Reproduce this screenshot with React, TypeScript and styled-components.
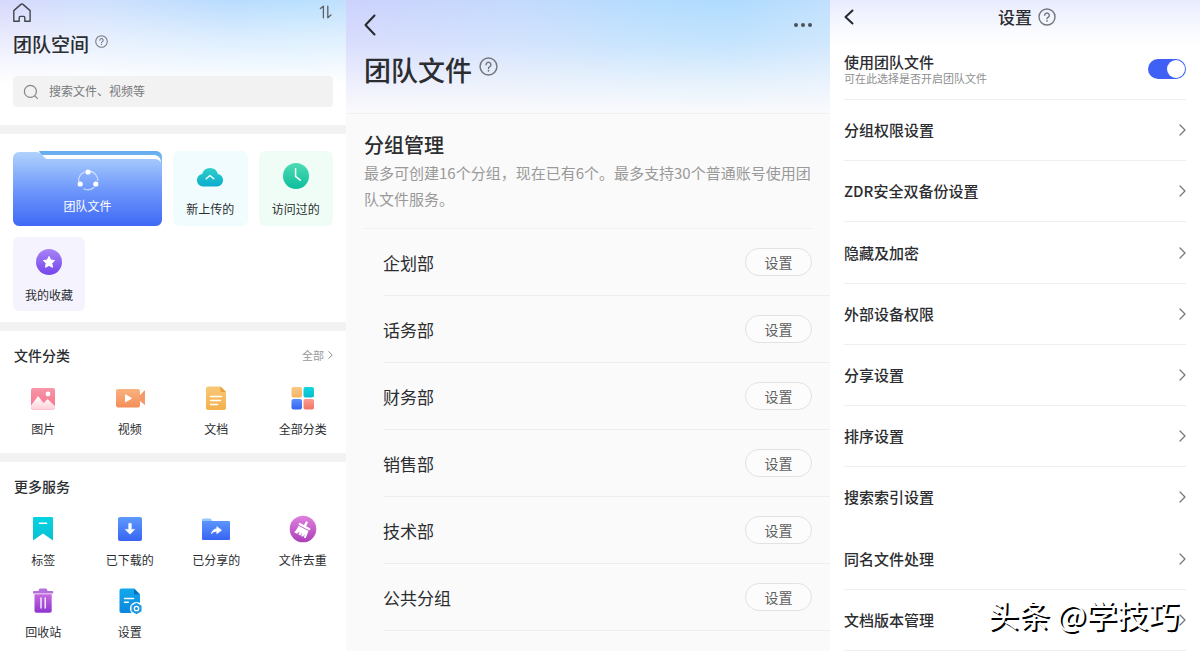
import React from "react";
import styled, { createGlobalStyle } from "styled-components";

const GlobalStyle = createGlobalStyle`
  *, *::before, *::after { box-sizing: border-box; }
  body {
    margin: 0;
    font-family: "Noto Sans CJK SC", "Noto Sans", sans-serif;
    color: #2b2d30;
    background: #fff;
  }
  h1, h2, p, ul { margin: 0; padding: 0; }
  ul { list-style: none; }
  button { font: inherit; color: inherit; padding: 0; border: 0; background: none; cursor: pointer; }
  svg { display: block; flex: none; }
`;

const Page = styled.main`
  display: grid;
  grid-template-columns: 346fr 484fr 370fr;
  min-height: 100vh;
`;

/* ---------- team space ---------- */

const SpacePanel = styled.section`
  min-width: 0;
  background: #fff;
`;

const SpaceHeader = styled.header`
  padding: 3px 13px 18px;
  background:
    linear-gradient(180deg, rgba(255, 255, 255, 0) 0, rgba(255, 255, 255, 0.5) 38px, #fff 84px),
    linear-gradient(90deg, #d6d8fb 0%, #cfe0fd 28%, #b9dcfe 66%, #b9e0fe 88%, #c0e0fd 100%);
`;

const TopBar = styled.div`
  display: flex;
  align-items: center;
  justify-content: space-between;
`;

const IconButton = styled.button`
  display: flex;
`;

const TitleRow = styled.div<{ $gap: number }>`
  display: flex;
  align-items: flex-start;
  gap: ${(p) => p.$gap}px;
`;

const SpaceTitle = styled.h1`
  margin-top: 7px;
  font-size: 19px;
  line-height: 28px;
  font-weight: 500;
`;

const SpaceHelp = styled(IconButton)`
  margin-top: 12px;
`;

const SearchBox = styled.label`
  display: flex;
  align-items: center;
  gap: 10px;
  height: 31px;
  margin-top: 18px;
  padding: 0 10px;
  border-radius: 4px;
  background: #f2f2f2;
`;

const SearchInput = styled.input`
  flex: 1;
  min-width: 0;
  padding: 0 0 2px;
  border: 0;
  outline: 0;
  background: none;
  font: inherit;
  font-size: 12px;
  line-height: 18px;
  &::placeholder { color: #77797c; opacity: 1; }
`;

const Block = styled.section`
  padding-bottom: 15px;
  border-top: 9px solid #f2f2f2;
  &:last-child { padding-bottom: 8px; }
`;

const Shortcuts = styled.div`
  display: grid;
  grid-template-columns: 2fr 1fr 1fr;
  gap: 11px;
  margin-bottom: -4px;
  padding: 17px 13px 0;
`;

const ShortcutCard = styled.button<{ $tint: string }>`
  display: flex;
  flex-direction: column;
  align-items: center;
  gap: 10px;
  height: 75px;
  padding-top: 11px;
  border-radius: 6px;
  background: ${(p) => p.$tint};
  font-size: 12px;
  line-height: 18px;
`;

const FavouriteCard = styled(ShortcutCard)`
  width: 72px;
  height: 74px;
`;

const FolderCard = styled(ShortcutCard)`
  position: relative;
  gap: 3px;
  padding-top: 15px;
  color: #fff;
`;

const FolderShape = styled.svg`
  position: absolute;
  inset: 0;
  width: 100%;
  height: 100%;
`;

const Above = styled.span`
  position: relative;
`;

const BlockHead = styled.div`
  display: flex;
  align-items: center;
  justify-content: space-between;
  padding: 14px 13px 19px 14px;
`;

const BlockTitle = styled.h2`
  font-size: 14px;
  line-height: 20px;
  font-weight: 500;
`;

const MoreLink = styled.a`
  display: flex;
  align-items: center;
  gap: 4px;
  color: #98999b;
  font-size: 11px;
  line-height: 20px;
  text-decoration: none;
`;

const Tiles = styled.div`
  display: grid;
  grid-template-columns: repeat(4, 1fr);
  row-gap: 18px;
`;

const Tile = styled.button`
  display: flex;
  flex-direction: column;
  align-items: center;
  gap: 8px;
  font-size: 12px;
  line-height: 18px;
`;

/* ---------- team files ---------- */

const FilesPanel = styled.section`
  min-width: 0;
  background: #fafafa;
`;

const FilesHeader = styled.header`
  height: 114px;
  padding: 14px 17px 0 18px;
  border-bottom: 1px solid #eef0f3;
  background:
    linear-gradient(180deg, rgba(250, 250, 250, 0) 0, rgba(250, 250, 252, 0.3) 45px, rgba(250, 250, 252, 0.7) 80px, #fafafc 112px),
    linear-gradient(90deg, #ccd2fd 0%, #c4dafd 35%, #b4dcfe 62%, #afdbfe 80%, #c0e0fe 100%);
`;

const FilesTitle = styled.h1`
  margin-top: 16px;
  font-size: 27px;
  line-height: 36px;
  font-weight: 500;
`;

const FilesHelp = styled(IconButton)`
  margin-top: 21px;
`;

const GroupIntro = styled.div`
  padding: 16px 18px;
`;

const GroupTitle = styled.h2`
  font-size: 20px;
  line-height: 30px;
  font-weight: 500;
`;

const GroupNote = styled.p`
  color: #999;
  font-size: 15px;
  line-height: 26px;
`;

const GroupList = styled.ul`
  margin-left: 18px;
`;

const GroupTopLine = styled.li`
  height: 1px;
  margin-right: 17px;
  background: #f0f0f0;
`;

const GroupRow = styled.li`
  display: flex;
  align-items: center;
  justify-content: space-between;
  height: 67px;
  margin-left: 19px;
  padding-right: 18px;
  border-bottom: 1px solid #eee;
  font-size: 17px;
`;

const PillButton = styled.button`
  width: 67px;
  height: 28px;
  border: 1px solid #e2e2e2;
  border-radius: 14px;
  background: #fcfcfc;
  color: #606060;
  font-size: 14px;
  line-height: 20px;
`;

/* ---------- settings ---------- */

const SettingsPanel = styled.section`
  position: relative;
  display: flex;
  flex-direction: column;
  min-width: 0;
  background: #fff;
`;

const SettingsHeader = styled.header`
  display: grid;
  grid-template-columns: 1fr auto 1fr;
  align-items: center;
  column-gap: 6px;
  height: 48px;
  padding: 0 14px 14px;
  background: linear-gradient(180deg, #e8ebfd 0, #f0f2fe 14px, #f9faff 30px, #fff 46px);
`;

const SettingsTitle = styled.h1`
  font-size: 17px;
  line-height: 24px;
  font-weight: 500;
`;

const ToggleRow = styled.label`
  display: flex;
  align-items: center;
  justify-content: space-between;
  height: 52px;
  margin: 0 14px;
  padding-bottom: 10px;
  border-bottom: 1px solid #efefef;
`;

const ToggleText = styled.span`
  display: flex;
  flex-direction: column;
`;

const ToggleName = styled.span`
  font-size: 15px;
  line-height: 18px;
  font-weight: 500;
`;

const ToggleHint = styled.span`
  color: #8e8f91;
  font-size: 11px;
  line-height: 14px;
`;

const Switch = styled.input`
  appearance: none;
  width: 38px;
  height: 20px;
  margin: 0;
  padding: 1px;
  border-radius: 10px;
  background: #c9ccd2;
  cursor: pointer;
  &::before {
    content: "";
    display: block;
    width: 18px;
    height: 18px;
    border-radius: 50%;
    background: #fff;
  }
  &:checked { background: #3f60f5; }
  &:checked::before { margin-left: auto; }
`;

const SettingsList = styled.ul`
  display: grid;
  flex: 1;
  grid-auto-rows: minmax(56px, 1fr);
  margin: 0 14px;
`;

const SettingsItem = styled.li<{ $line: boolean }>`
  display: flex;
  border-bottom: 1px solid ${(p) => (p.$line ? "#efefef" : "transparent")};
`;

const SettingsButton = styled.button`
  display: flex;
  flex: 1;
  align-items: center;
  justify-content: space-between;
  font-size: 15px;
  line-height: 22px;
  font-weight: 500;
  text-align: left;
`;

const Watermark = styled.span`
  position: absolute;
  right: 21px;
  bottom: 15px;
  color: #fff;
  font-size: 31px;
  line-height: 44px;
  white-space: nowrap;
  text-shadow: 2px 2px 0 #000;
  pointer-events: none;
`;

/* ---------- icons ---------- */

const HelpIcon = ({ size, color = "#74777c" }: { size: number; color?: string }) => (
  <svg width={size} height={size} viewBox="0 0 18 18" fill="none" stroke={color} strokeWidth="1.4" strokeLinecap="round" aria-hidden>
    <circle cx="9" cy="9" r="8" />
    <path d="M6.7 7.3a2.3 2.3 0 1 1 3.6 1.9c-.8.5-1.3.9-1.3 1.6" />
    <path d="M9 12.9v.2" strokeWidth="1.6" />
  </svg>
);

const BackIcon = ({ width, height, stroke }: { width: number; height: number; stroke: number }) => (
  <svg width={width} height={height} viewBox={`0 0 ${width} ${height}`} fill="none" stroke="#26282b" strokeWidth={stroke} strokeLinecap="round" strokeLinejoin="round" aria-hidden>
    <path d={`M${width - 1.5} 1.5 1.5 ${height / 2}l${width - 3} ${height / 2 - 1.5}`} />
  </svg>
);

const ChevronIcon = ({ width, height }: { width: number; height: number }) => (
  <svg width={width} height={height} viewBox="0 0 7 12" fill="none" stroke="#77797c" strokeWidth="1.3" strokeLinecap="round" strokeLinejoin="round" aria-hidden>
    <path d="m1 1 5 5-5 5" />
  </svg>
);

const HomeIcon = () => (
  <svg width="18" height="20" viewBox="0 0 18 20" fill="none" stroke="#43464d" strokeWidth="1.4" strokeLinejoin="round" aria-hidden>
    <path d="M.8 7.6 7.9 1.4a1.6 1.6 0 0 1 2.1 0l7.1 6.2v10.6h-5.3v-3.6a1.2 1.2 0 0 0-1.2-1.2H7.4a1.2 1.2 0 0 0-1.2 1.2v3.6H.8z" />
  </svg>
);

const SortIcon = () => (
  <svg width="14" height="16" viewBox="0 0 14 16" fill="none" stroke="#5b6066" strokeWidth="1.3" strokeLinecap="round" strokeLinejoin="round" aria-hidden>
    <path d="M1.4 3.6 4.4 1.2v11.6M8.8 1.2v11.6l3.2-2.8" />
  </svg>
);

const SearchIcon = () => (
  <svg width="16" height="16" viewBox="0 0 16 16" fill="none" stroke="#858789" strokeWidth="1.2" strokeLinecap="round" aria-hidden>
    <circle cx="7.4" cy="7.4" r="6" />
    <path d="m11.8 11.8 2.6 2.6" />
  </svg>
);

const DotsIcon = () => (
  <svg width="20" height="6" viewBox="0 0 20 6" fill="#4d5156" aria-hidden>
    <circle cx="3" cy="3" r="2" />
    <circle cx="10" cy="3" r="2" />
    <circle cx="17" cy="3" r="2" />
  </svg>
);

const Gradient = ({ id, from, to }: { id: string; from: string; to: string }) => (
  <linearGradient id={id} x1="0" y1="0" x2="0" y2="1">
    <stop offset="0" stopColor={from} />
    <stop offset="1" stopColor={to} />
  </linearGradient>
);

const Glyph = ({ children }: { children: React.ReactNode }) => (
  <svg width="30" height="28" viewBox="0 0 30 28" fill="none" aria-hidden>
    {children}
  </svg>
);

const TeamIcon = () => (
  <Above>
    <Glyph>
      <g stroke="#fff" strokeWidth="1.4" strokeLinecap="round">
        <path d="M5.800 16a9.200 9.200 0 0 1 5.400-9.800" opacity=".55" />
        <path d="M17.400 5.200a9.600 9.600 0 0 1 7.400 9.400" opacity=".55" />
        <path d="M20.800 21.600a9.200 9.200 0 0 1-9.800 1.200" opacity=".55" />
      </g>
      <g fill="#fff">
        <circle cx="15" cy="6" r="2.6" />
        <circle cx="7.200" cy="18" r="2.6" />
        <circle cx="22.800" cy="18" r="2.6" />
      </g>
    </Glyph>
  </Above>
);

const CloudIcon = () => (
  <Glyph>
    <defs><Gradient id="cloud" from="#2fd0c8" to="#0aadcf" /></defs>
    <path d="M8 24.4a6.3 6.3 0 0 1-.9-12.5 8.2 8.2 0 0 1 15.8 0 6.3 6.3 0 0 1-.9 12.5z" fill="url(#cloud)" />
    <path d="m11.2 16.8 3.8-3.4 3.8 3.4" stroke="#fff" strokeWidth="1.4" strokeLinecap="round" strokeLinejoin="round" />
  </Glyph>
);

const ClockIcon = () => (
  <Glyph>
    <defs><Gradient id="clock" from="#4fdcb4" to="#0cbd9c" /></defs>
    <circle cx="15" cy="14" r="13" fill="url(#clock)" />
    <path d="M14.6 6.8v7.6l4.6 3.8" stroke="#fff" strokeWidth="1.5" strokeLinecap="round" strokeLinejoin="round" />
  </Glyph>
);

const StarIcon = () => (
  <Glyph>
    <defs><Gradient id="star" from="#a783f6" to="#7546ec" /></defs>
    <circle cx="15" cy="14" r="13" fill="url(#star)" />
    <path d="m15 8.400 1.700 3.600 4 .5-2.900 2.800.7 4-3.500-1.900-3.500 1.900.7-4-2.900-2.800 4-.5z" fill="#fff" stroke="#fff" strokeLinejoin="round" />
  </Glyph>
);

const PictureIcon = () => (
  <Glyph>
    <defs>
      <Gradient id="pic" from="#f896a8" to="#f4718d" />
      <Gradient id="hill" from="#fff" to="#ffd0da" />
    </defs>
    <rect x="3" y="4" width="24" height="21.5" rx="2" fill="url(#pic)" />
    <path d="M3 21.5 10 12l5.6 7 4-4 7.4 7v1.5a2 2 0 0 1-2 2H5a2 2 0 0 1-2-2z" fill="url(#hill)" />
    <circle cx="20" cy="10" r="2.4" fill="#fff" />
  </Glyph>
);

const VideoIcon = () => (
  <Glyph>
    <defs><Gradient id="video" from="#f9b27e" to="#f58e58" /></defs>
    <path d="M24 12.2 29.4 6.6a.4.4 0 0 1 .6.3v13.6a.4.4 0 0 1-.6.3L24 16z" fill="#f49a68" />
    <rect x="1" y="5" width="24" height="18.5" rx="2" fill="url(#video)" />
    <path d="M10.500 10.800v7l6-3.500z" fill="#fff" stroke="#fff" strokeLinejoin="round" />
  </Glyph>
);

const DocIcon = () => (
  <Glyph>
    <defs><Gradient id="doc" from="#f8c878" to="#f4b04c" /></defs>
    <path d="M7 2.5h12.5l5.5 5.5v16a2 2 0 0 1-2 2H7a2 2 0 0 1-2-2v-19.5a2 2 0 0 1 2-2z" fill="url(#doc)" />
    <path d="M19.5 2.5v4a1.5 1.5 0 0 0 1.5 1.5h4z" fill="#ee9c38" />
    <path d="M9.5 12.5h11M9.5 16.5h10M9.5 20.5h7" stroke="#fff" strokeWidth="1.4" strokeLinecap="round" />
  </Glyph>
);

const AllIcon = () => (
  <Glyph>
    <defs>
      <Gradient id="all1" from="#fac984" to="#f3b462" />
      <Gradient id="all2" from="#14d6de" to="#08bccf" />
      <Gradient id="all3" from="#5b90fb" to="#3665f2" />
      <Gradient id="all4" from="#f99d8e" to="#f27463" />
    </defs>
    <rect x="3.5" y="3" width="10.5" height="10.5" rx="2" fill="url(#all1)" />
    <rect x="15.5" y="3" width="10.5" height="10.5" rx="2" fill="url(#all2)" />
    <rect x="3.5" y="15" width="10.5" height="10.5" rx="2" fill="url(#all3)" />
    <rect x="15.5" y="15" width="10.5" height="10.5" rx="2" fill="url(#all4)" />
  </Glyph>
);

const TagIcon = () => (
  <Glyph>
    <defs><Gradient id="tag" from="#04d4e2" to="#0abfd3" /></defs>
    <path d="M5 3a1 1 0 0 1 1-1h18a1 1 0 0 1 1 1v22.500l-10-7-10 7z" fill="url(#tag)" />
    <path d="M11.4 8.2h7.2" stroke="#fff" strokeWidth="1.4" strokeLinecap="round" />
  </Glyph>
);

const DownloadIcon = () => (
  <Glyph>
    <defs><Gradient id="down" from="#5e9afc" to="#3864f3" /></defs>
    <rect x="3" y="2" width="24" height="24" rx="2" fill="url(#down)" />
    <path d="M13.7 8.4h2.6v6h3.4L15 19.2l-4.7-4.800h3.400z" fill="#fff" stroke="#fff" strokeWidth=".6" strokeLinejoin="round" />
  </Glyph>
);

const ShareIcon = () => (
  <Glyph>
    <defs><Gradient id="share" from="#5c96fb" to="#3764f3" /></defs>
    <path d="M2.5 3.5h6.4a1.5 1.5 0 0 1 1.2.6L11.5 6H28v6H1V5a1.5 1.5 0 0 1 1.5-1.500z" fill="#96c8fb" />
    <path d="M1 6h27a1 1 0 0 1 1 1v17a1 1 0 0 1-1 1h-26a1 1 0 0 1-1-1z" fill="url(#share)" />
    <path d="M15.800 11.600l4.800 3.600-4.800 3.600v-2.300c-2.400-.2-3.900.4-5.400 2.400.3-2.900 2.200-4.800 5.400-5.200z" fill="#fff" stroke="#fff" strokeWidth=".6" strokeLinejoin="round" />
  </Glyph>
);

const BroomIcon = () => (
  <Glyph>
    <defs><Gradient id="broom" from="#e07fe0" to="#ab40b8" /></defs>
    <circle cx="15" cy="14" r="13.3" fill="url(#broom)" />
    <g transform="rotate(28 15 14)" fill="#fff">
      <rect x="14" y="5.5" width="2.4" height="5.6" rx="1.1" />
      <rect x="8.8" y="10" width="12.8" height="2.2" rx=".8" />
      <path d="M9.6 13.2h11.2l.9 7.800h-2l-.7-3.200-.4 3.200h-2l-.5-3.200-.5 3.200h-2l-.5-3.200-1.2 3.200H8.700c.8-2 1.100-4.600.9-7.800z" />
    </g>
  </Glyph>
);

const TrashIcon = () => (
  <Glyph>
    <defs><Gradient id="trash" from="#c66ae0" to="#8f35cf" /></defs>
    <path d="M10.5 4 11 2.2A1.2 1.2 0 0 1 12.2 1.4h5.6a1.2 1.2 0 0 1 1.2.8l.5 1.800h4.700a1 1 0 0 1 1 1v1.500H5V5a1 1 0 0 1 1-1z" fill="#b76fdc" />
    <path d="M6.500 7.200h17.200V23.800a2 2 0 0 1-2 2H8.500a2 2 0 0 1-2-2z" fill="url(#trash)" />
    <path d="M13 11v10M17.200 11v10" stroke="#fff" strokeWidth="1.3" strokeLinecap="round" />
  </Glyph>
);

const SettingsDocIcon = () => (
  <Glyph>
    <defs><Gradient id="sdoc" from="#12a9ee" to="#0b86dc" /></defs>
    <path d="M6.5 1.5h12.500l6 6V24a2 2 0 0 1-2 2H6.500a2 2 0 0 1-2-2V3.500a2 2 0 0 1 2-2z" fill="url(#sdoc)" />
    <path d="M19 1.500v4.500a1.500 1.500 0 0 0 1.500 1.500H25z" fill="#0670bd" />
    <path d="M9.500 11.500h9M9.500 15.200h4" stroke="#fff" strokeWidth="1.4" strokeLinecap="round" />
    <circle cx="21.5" cy="21.5" r="6.6" fill="#fff" />
    <path d="m21.500 16.500 4.300 2.500v5l-4.300 2.500-4.300-2.500v-5z" fill="#1b97de" stroke="#1b97de" strokeWidth="1.4" strokeLinejoin="round" />
    <circle cx="21.5" cy="21.5" r="2.2" stroke="#fff" strokeWidth="1.3" />
  </Glyph>
);

const FolderArt = () => (
  <FolderShape viewBox="0 0 149 75" preserveAspectRatio="none" aria-hidden>
    <defs>
      <Gradient id="back" from="#63abee" to="#a4d2fa" />
      <linearGradient id="front" x1="0" y1="0" x2="0" y2="1">
        <stop offset="0" stopColor="#b0d3fc" />
        <stop offset=".5" stopColor="#7099fb" />
        <stop offset="1" stopColor="#3f69f6" />
      </linearGradient>
    </defs>
    <path d="M26 0h117a6 6 0 0 1 6 6v20H40z" fill="url(#back)" />
    <path d="M29 4h112a7 7 0 0 1 7 7v14H40z" fill="#fff" />
    <path d="M6 1h18a5 5 0 0 1 4 2l4 4a4 4 0 0 0 3 1h107a7 7 0 0 1 7 7v54a6 6 0 0 1-6 6H6a6 6 0 0 1-6-6V7a6 6 0 0 1 6-6z" fill="url(#front)" />
  </FolderShape>
);

/* ---------- data ---------- */

const categories = [
  { label: "图片", Icon: PictureIcon },
  { label: "视频", Icon: VideoIcon },
  { label: "文档", Icon: DocIcon },
  { label: "全部分类", Icon: AllIcon },
];

const services = [
  { label: "标签", Icon: TagIcon },
  { label: "已下载的", Icon: DownloadIcon },
  { label: "已分享的", Icon: ShareIcon },
  { label: "文件去重", Icon: BroomIcon },
  { label: "回收站", Icon: TrashIcon },
  { label: "设置", Icon: SettingsDocIcon },
];

const groups = ["企划部", "话务部", "财务部", "销售部", "技术部", "公共分组"];

const settings = [
  { label: "分组权限设置", line: true },
  { label: "ZDR安全双备份设置", line: true },
  { label: "隐藏及加密", line: true },
  { label: "外部设备权限", line: true },
  { label: "分享设置", line: true },
  { label: "排序设置", line: true },
  { label: "搜索索引设置", line: false },
  { label: "同名文件处理", line: true },
  { label: "文档版本管理", line: true },
];

const TeamSpace = () => (
  <SpacePanel>
    <SpaceHeader>
      <TopBar>
        <IconButton aria-label="首页"><HomeIcon /></IconButton>
        <IconButton aria-label="排序"><SortIcon /></IconButton>
      </TopBar>
      <TitleRow $gap={6}>
        <SpaceTitle>团队空间</SpaceTitle>
        <SpaceHelp aria-label="帮助"><HelpIcon size={13} /></SpaceHelp>
      </TitleRow>
      <SearchBox>
        <SearchIcon />
        <SearchInput type="text" placeholder="搜索文件、视频等" aria-label="搜索" />
      </SearchBox>
    </SpaceHeader>
    <Block>
      <Shortcuts>
        <FolderCard $tint="none">
          <FolderArt />
          <TeamIcon />
          <Above>团队文件</Above>
        </FolderCard>
        <ShortcutCard $tint="#f1fcfe"><CloudIcon />新上传的</ShortcutCard>
        <ShortcutCard $tint="#effdf6"><ClockIcon />访问过的</ShortcutCard>
        <FavouriteCard $tint="#f5f4fe"><StarIcon />我的收藏</FavouriteCard>
      </Shortcuts>
    </Block>
    <Block>
      <BlockHead>
        <BlockTitle>文件分类</BlockTitle>
        <MoreLink href="#categories">全部<ChevronIcon width={5} height={8} /></MoreLink>
      </BlockHead>
      <Tiles>
        {categories.map(({ label, Icon }) => (
          <Tile key={label}><Icon />{label}</Tile>
        ))}
      </Tiles>
    </Block>
    <Block>
      <BlockHead>
        <BlockTitle>更多服务</BlockTitle>
      </BlockHead>
      <Tiles>
        {services.map(({ label, Icon }) => (
          <Tile key={label}><Icon />{label}</Tile>
        ))}
      </Tiles>
    </Block>
  </SpacePanel>
);

const TeamFiles = () => (
  <FilesPanel>
    <FilesHeader>
      <TopBar>
        <IconButton aria-label="返回"><BackIcon width={12} height={22} stroke={2} /></IconButton>
        <IconButton aria-label="更多"><DotsIcon /></IconButton>
      </TopBar>
      <TitleRow $gap={7}>
        <FilesTitle>团队文件</FilesTitle>
        <FilesHelp aria-label="帮助"><HelpIcon size={19} /></FilesHelp>
      </TitleRow>
    </FilesHeader>
    <GroupIntro>
      <GroupTitle>分组管理</GroupTitle>
      <GroupNote>最多可创建16个分组，现在已有6个。最多支持30个普通账号使用团队文件服务。</GroupNote>
    </GroupIntro>
    <GroupList>
      <GroupTopLine aria-hidden />
      {groups.map((name) => (
        <GroupRow key={name}>
          {name}
          <PillButton aria-label={`${name}设置`}>设置</PillButton>
        </GroupRow>
      ))}
    </GroupList>
  </FilesPanel>
);

const TeamSettings = () => (
  <SettingsPanel>
    <SettingsHeader>
      <IconButton aria-label="返回"><BackIcon width={10} height={16} stroke={2} /></IconButton>
      <SettingsTitle>设置</SettingsTitle>
      <IconButton aria-label="帮助"><HelpIcon size={18} /></IconButton>
    </SettingsHeader>
    <ToggleRow>
      <ToggleText>
        <ToggleName>使用团队文件</ToggleName>
        <ToggleHint>可在此选择是否开启团队文件</ToggleHint>
      </ToggleText>
      <Switch type="checkbox" defaultChecked />
    </ToggleRow>
    <SettingsList>
      {settings.map(({ label, line }) => (
        <SettingsItem key={label} $line={line}>
          <SettingsButton>{label}<ChevronIcon width={7} height={12} /></SettingsButton>
        </SettingsItem>
      ))}
    </SettingsList>
    <Watermark>头条 @学技巧</Watermark>
  </SettingsPanel>
);

export default function App() {
  return (
    <>
      <GlobalStyle />
      <Page>
        <TeamSpace />
        <TeamFiles />
        <TeamSettings />
      </Page>
    </>
  );
}
